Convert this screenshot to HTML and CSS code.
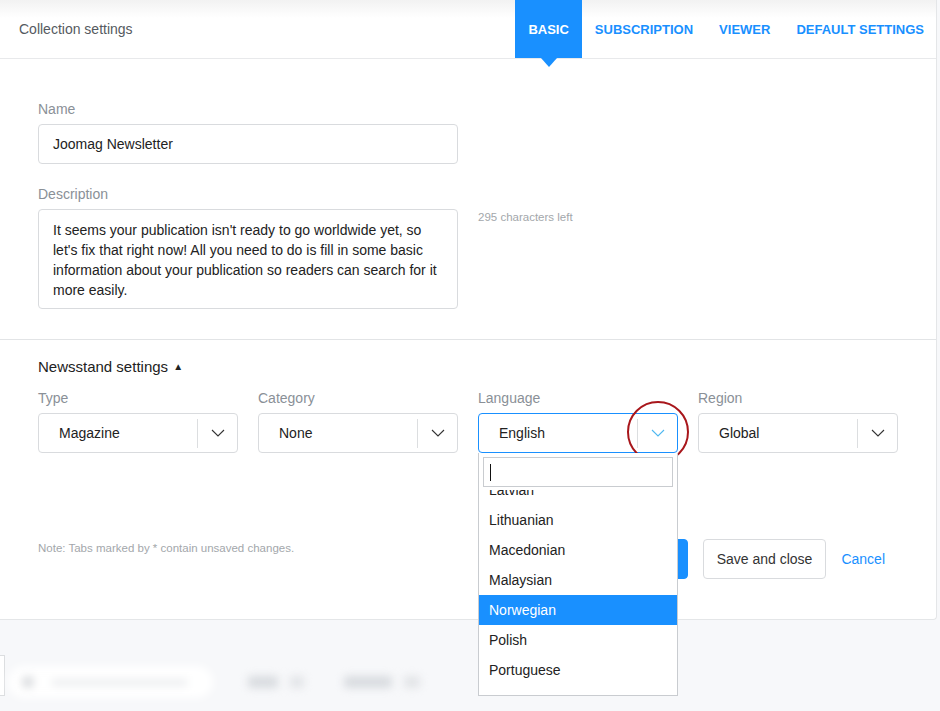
FILE: index.html
```html
<!DOCTYPE html>
<html lang="en">

<head>
    <meta charset="UTF-8">
    <meta name="viewport" content="width=device-width, initial-scale=1">
    <title>Collection settings</title>
    <link rel="stylesheet" href="styles.css">
</head>

<body>

    <div class="modal">
        <div class="modal_head">
            <div class="modal_title">Collection settings</div>
            <div class="tabs">
                <div class="tab active">BASIC</div>
                <div class="tab">SUBSCRIPTION</div>
                <div class="tab">VIEWER</div>
                <div class="tab">DEFAULT SETTINGS</div>
            </div>
        </div>

        <div class="section">
            <div class="label">Name</div>
            <div class="input">Joomag Newsletter</div>

            <div class="label label_gap">Description</div>
            <div class="desc_row">
                <div class="textarea">It seems your publication isn't ready to go worldwide yet, so let's fix that right now! All you need to do is fill in some basic information about your publication so readers can search for it more easily.</div>
                <div class="chars_left">295 characters left</div>
            </div>
        </div>

        <div class="section newsstand">
            <div class="section_title">Newsstand settings <span class="caret">&#9650;</span></div>
            <div class="selects">
                <div class="field">
                    <div class="label">Type</div>
                    <div class="select">
                        <span class="select_value">Magazine</span>
                        <span class="select_arrow">
                            <svg width="14" height="8" viewBox="0 0 14 8"><path d="M1 1l6 6 6-6" fill="none" stroke="#333" stroke-width="1.1"/></svg>
                        </span>
                    </div>
                </div>
                <div class="field">
                    <div class="label">Category</div>
                    <div class="select">
                        <span class="select_value">None</span>
                        <span class="select_arrow">
                            <svg width="14" height="8" viewBox="0 0 14 8"><path d="M1 1l6 6 6-6" fill="none" stroke="#333" stroke-width="1.1"/></svg>
                        </span>
                    </div>
                </div>
                <div class="field">
                    <div class="label">Language</div>
                    <div class="select open">
                        <span class="select_value">English</span>
                        <span class="select_arrow">
                            <svg width="14" height="8" viewBox="0 0 14 8"><path d="M1 1l6 6 6-6" fill="none" stroke="#4fb8f0" stroke-width="1.1"/></svg>
                        </span>
                        <span class="highlight_ring"></span>
                        <div class="dropdown">
                            <div class="search"><span class="cursor"></span></div>
                            <div class="options">
                                <div class="options_inner">
                                    <div class="option">Latvian</div>
                                    <div class="option">Lithuanian</div>
                                    <div class="option">Macedonian</div>
                                    <div class="option">Malaysian</div>
                                    <div class="option selected">Norwegian</div>
                                    <div class="option">Polish</div>
                                    <div class="option">Portuguese</div>
                                </div>
                            </div>
                        </div>
                    </div>
                </div>
                <div class="field">
                    <div class="label">Region</div>
                    <div class="select">
                        <span class="select_value">Global</span>
                        <span class="select_arrow">
                            <svg width="14" height="8" viewBox="0 0 14 8"><path d="M1 1l6 6 6-6" fill="none" stroke="#333" stroke-width="1.1"/></svg>
                        </span>
                    </div>
                </div>
            </div>

            <div class="footer">
                <div class="note">Note: Tabs marked by * contain unsaved changes.</div>
                <div class="actions">
                    <button class="btn btn_primary">Save</button>
                    <button class="btn">Save and close</button>
                    <a class="cancel">Cancel</a>
                </div>
            </div>
        </div>
    </div>

    <div class="backdrop">
        <div class="side_card"></div>
        <div class="blur_row">
            <div class="search_pill"><span class="dot"></span><span class="line"></span></div>
            <div class="blob b1"></div>
            <div class="blob b2"></div>
            <div class="blob b3"></div>
            <div class="blob b4"></div>
        </div>
    </div>

</body>

</html>
```

FILE: styles.css
```css
body {
    margin: 0;
    background: #f7f8fa;
    font-family: "Liberation Sans", Arial, sans-serif;
    font-size: 14px;
    color: #222;
    overflow: hidden;
}

.modal {
    width: 936px;
    background: #fff;
    border-right: 1px solid #e4e6e8;
    border-bottom: 1px solid #e4e6e8;
    border-bottom-right-radius: 4px;
}

.modal_head {
    display: flex;
    align-items: center;
    height: 58px;
    border-bottom: 1px solid #e8e9eb;
    background: linear-gradient(#f2f2f2, #fff 18px);
}

.modal_title {
    padding-left: 19px;
    color: #555a60;
    font-size: 14px;
}

.tabs {
    display: flex;
    margin-left: auto;
    height: 100%;
}

.tab {
    display: flex;
    align-items: center;
    padding: 0 13px;
    color: #1990ff;
    font-weight: bold;
    font-size: 13px;
    position: relative;
}

.tab:last-child {
    padding-right: 12px;
}

.tab.active {
    background: #1990ff;
    color: #fff;
}

.tab.active::after {
    content: "";
    position: absolute;
    left: 50%;
    top: 100%;
    margin-left: -8px;
    border-left: 8px solid transparent;
    border-right: 8px solid transparent;
    border-top: 9px solid #1990ff;
}

.section {
    padding: 41px 38px 30px;
}

.label {
    color: #8a9097;
    font-size: 14px;
    line-height: 18px;
    margin-bottom: 6px;
}

.label_gap {
    margin-top: 21px;
}

.input {
    width: 404px;
    height: 38px;
    line-height: 38px;
    padding: 0 0 0 14px;
    border: 1px solid #d9dbde;
    border-radius: 4px;
}

.desc_row {
    display: flex;
    align-items: flex-start;
}

.textarea {
    width: 390px;
    height: 78px;
    padding: 10px 14px 10px 14px;
    border: 1px solid #d9dbde;
    border-radius: 4px;
    line-height: 20px;
}

.chars_left {
    margin-left: 20px;
    margin-top: 2px;
    font-size: 11.5px;
    color: #a3a7ab;
}

.newsstand {
    border-top: 1px solid #e2e4e6;
    padding-top: 17px;
    padding-bottom: 40px;
}

.section_title {
    font-size: 15px;
    line-height: 20px;
    margin-bottom: 12px;
}

.caret {
    font-size: 10px;
    vertical-align: 2px;
    margin-left: 1px;
}

.selects {
    display: flex;
    gap: 20px;
}

.field {
    width: 200px;
}

.select {
    position: relative;
    display: flex;
    align-items: center;
    height: 38px;
    border: 1px solid #d9dbde;
    border-radius: 4px;
}

.select.open {
    border-color: #1990ff;
}

.select_value {
    flex: 1;
    padding-left: 20px;
}

.select_arrow {
    display: flex;
    align-items: center;
    justify-content: center;
    width: 39px;
    height: 29px;
    border-left: 1px solid #dcdee0;
}

.highlight_ring {
    position: absolute;
    left: 148px;
    top: -13px;
    width: 58px;
    height: 58px;
    border: 2px solid #a8161b;
    border-radius: 50%;
}

.dropdown {
    position: absolute;
    left: -1px;
    top: 39px;
    width: 198px;
    height: 242px;
    background: #fff;
    border: 1px solid #c9ccd0;
    border-top: none;
    z-index: 5;
}

.search {
    margin: 4px 4px 0;
    height: 28px;
    border: 1px solid #c9ccd0;
    display: flex;
    align-items: center;
}

.cursor {
    display: block;
    width: 1px;
    height: 17px;
    margin-left: 6px;
    background: #111;
}

.options {
    height: 207px;
    overflow: hidden;
    margin-top: 3px;
}

.options_inner {
    margin-top: -15px;
}

.option {
    height: 30px;
    line-height: 30px;
    padding-left: 10px;
}

.option.selected {
    background: #1990ff;
    color: #fff;
}

.footer {
    display: flex;
    align-items: flex-start;
    margin-top: 86px;
}

.note {
    margin-top: 3px;
    font-size: 11.5px;
    color: #a3a7ab;
}

.actions {
    display: flex;
    align-items: center;
    margin-left: auto;
    margin-right: 13px;
}

.btn {
    height: 40px;
    padding: 0 13px;
    border: 1px solid #d9dbde;
    border-radius: 4px;
    background: #fff;
    font-family: inherit;
    font-size: 14px;
    color: #333;
    margin-left: 15px;
}

.btn_primary {
    width: 80px;
    background: #1990ff;
    border-color: #1990ff;
    color: #fff;
}

.cancel {
    margin-left: 15px;
    color: #1990ff;
}

.backdrop {
    position: relative;
    height: 92px;
}

.side_card {
    position: absolute;
    left: 0;
    top: 35px;
    width: 4px;
    height: 39px;
    background: #fff;
    border: 1px solid #dcdee0;
    border-left: none;
}

.blur_row {
    display: flex;
    align-items: center;
    padding: 46px 0 0 8px;
    filter: blur(4px);
}

.search_pill {
    display: flex;
    align-items: center;
    width: 205px;
    height: 32px;
    background: #fff;
    border-radius: 16px;
}

.dot {
    width: 12px;
    height: 12px;
    margin-left: 14px;
    border-radius: 50%;
    background: #d8dadd;
}

.line {
    width: 135px;
    height: 5px;
    margin-left: 18px;
    background: #e6e8eb;
}

.blob {
    height: 12px;
    background: #d8dbdf;
    border-radius: 3px;
}

.b1 {
    width: 30px;
    margin-left: 35px;
}

.b2 {
    width: 14px;
    margin-left: 12px;
    background: #e2e4e7;
}

.b3 {
    width: 48px;
    margin-left: 40px;
}

.b4 {
    width: 16px;
    margin-left: 12px;
    background: #e2e4e7;
}
```
